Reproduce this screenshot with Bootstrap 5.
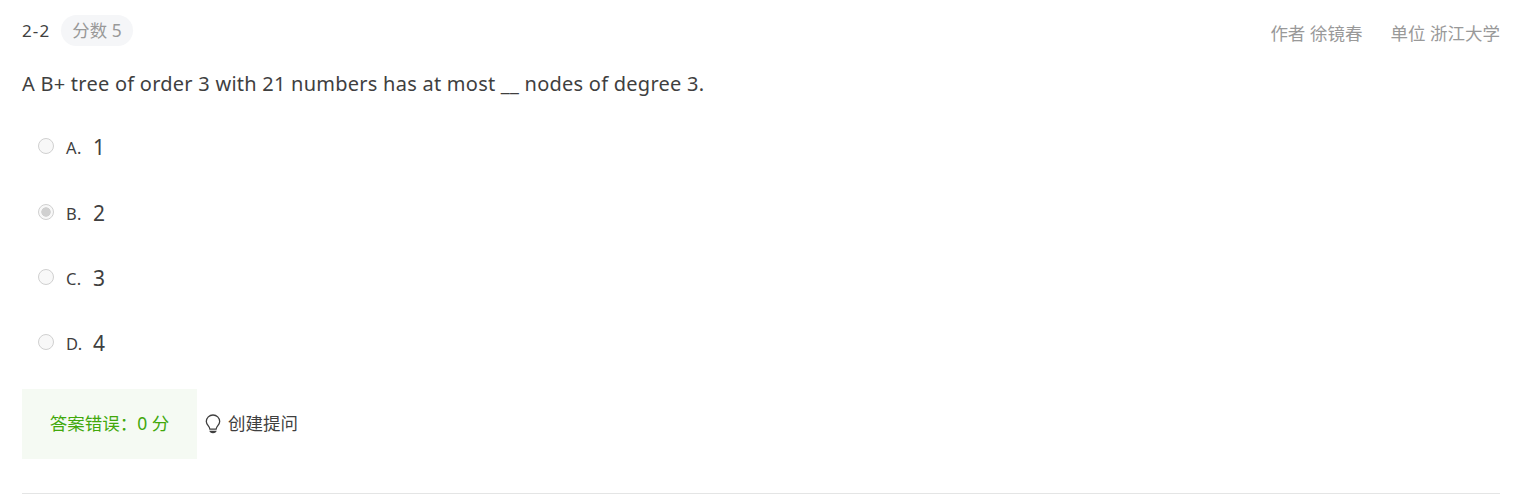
<!DOCTYPE html>
<html lang="zh-CN">
<head>
<meta charset="utf-8">
<meta name="viewport" content="width=device-width, initial-scale=1">
<title>2-2</title>
<link href="https://cdn.jsdelivr.net/npm/bootstrap@5.3.0/dist/css/bootstrap.min.css" rel="stylesheet">
<style>
body{font-family:"Noto Sans","Noto Sans CJK SC",sans-serif;font-size:17.5px;line-height:26px;color:#3f3f3f;background:#fff;overflow:hidden}
.problem{margin:0 20px 0 22px;height:494px;border-bottom:1px solid #e4e5e5}
.problem-head{padding-top:15px;height:46px}
.number{font-size:17px;width:39px;letter-spacing:1.1px}
.score{width:72px;height:31px;padding-bottom:2px;background:#f5f6f8;color:#999;font-size:17.4px}
.meta{color:#999;gap:28px;padding-top:5px}
.question{font-size:20px;line-height:30px;margin-top:23px;white-space:nowrap;letter-spacing:.245px}
.options{margin-top:16px;padding-left:16px}
.option{height:65.4px}
.option input{appearance:none;width:16px;height:16px;margin:0 12px 3px 0;border:1.4px solid #d0d0d0;border-radius:50%;background:#f8f8f8}
.option input:checked{background:radial-gradient(circle,#d0d0d0 0 4.4px,#f8f8f8 5px)}
.letter{font-size:16.5px;width:27px;padding-top:1px;letter-spacing:.4px}
.value{font-size:21px;padding-bottom:1px}
.result{width:175px;height:70px;padding-bottom:2px;background:#f5faf3;color:#41a80b}
.ask svg{margin:0 7px 0 8px}
.ask span{padding-bottom:2px}
</style>
</head>
<body>
<main class="problem">
  <header class="problem-head d-flex justify-content-between align-items-start">
    <div class="d-flex align-items-center"><span class="number">2-2</span><span class="score rounded-pill d-flex align-items-center justify-content-center">分数 5</span></div>
    <div class="meta d-flex"><span>作者 徐镜春</span><span>单位 浙江大学</span></div>
  </header>
  <p class="question mb-0"><span>A B+ tree of order 3 with 21 numbers has at most __ nodes of degree 3.</span></p>
  <div class="options">
    <label class="option d-flex align-items-center"><input type="radio" name="q" disabled><span class="letter">A.</span><span class="value">1</span></label>
    <label class="option d-flex align-items-center"><input type="radio" name="q" checked disabled><span class="letter">B.</span><span class="value">2</span></label>
    <label class="option d-flex align-items-center"><input type="radio" name="q" disabled><span class="letter">C.</span><span class="value">3</span></label>
    <label class="option d-flex align-items-center"><input type="radio" name="q" disabled><span class="letter">D.</span><span class="value">4</span></label>
  </div>
  <div class="d-flex mt-2 pt-1">
    <div class="result d-flex align-items-center justify-content-center"><span>答案错误：0 分</span></div>
    <div class="ask d-flex align-items-center">
      <svg width="16" height="20" viewBox="0 0 16 20" fill="none" stroke="#3f3f3f" stroke-width="1.3"><path d="M4.9 15.2C4.9 12.2 1.3 10.8 1.3 7.5a6.7 6.5 0 0 1 13.4 0c0 3.3-3.6 4.7-3.6 7.7Z"/><path d="M4.3 16.7h7.4c-.4 1.6-1.6 2.5-3.7 2.5s-3.3-.9-3.7-2.5Z" fill="#3f3f3f" stroke="none"/></svg>
      <span>创建提问</span>
    </div>
  </div>
</main>
<script src="https://cdn.jsdelivr.net/npm/bootstrap@5.3.0/dist/js/bootstrap.bundle.min.js"></script>
</body>
</html>
